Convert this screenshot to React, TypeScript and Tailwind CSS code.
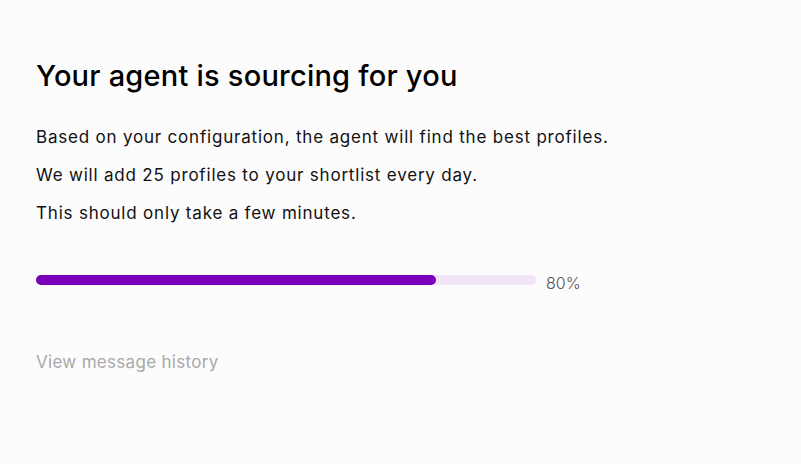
export default function App() {
    const progress = 80

    return (
        <div className="min-h-[464px] w-full bg-[#fcfcfd] px-9 pt-[58px] font-['Inter',sans-serif]">
            <h1 className="text-[29px] font-medium leading-[36px] text-black tracking-[0.22px]">
                Your agent is sourcing for you
            </h1>

            <div className="mt-[30px] flex flex-col gap-[12px] text-[17px] leading-[26px] tracking-[0.8px] text-[#111]">
                <p>Based on your configuration, the agent will find the best profiles.</p>
                <p>We will add 25 profiles to your shortlist every day.</p>
                <p>This should only take a few minutes.</p>
            </div>

            <div className="mt-[39px] flex items-center gap-[10px]">
                <div className="h-[10px] w-[500px] rounded-full bg-[#f2e5f8]">
                    <div
                        className="h-full rounded-full bg-[#7900b9]"
                        style={{ width: `${progress}%` }}
                    />
                </div>
                <span className="mt-[6px] text-[16px] font-light text-[#555]">{progress}%</span>
            </div>

            <button className="mt-[55px] text-[17px] tracking-[0.3px] text-[#a9a9a9]">
                View message history
            </button>
        </div>
    )
}
